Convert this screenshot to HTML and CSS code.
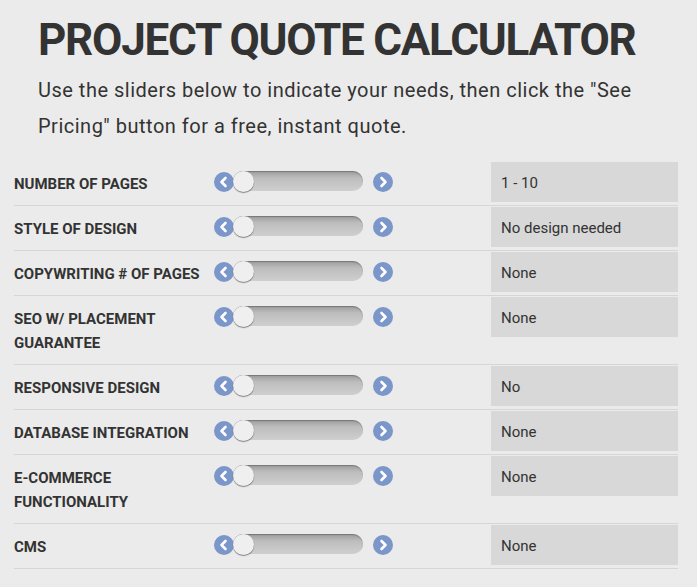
FILE: index.html
```html
<!DOCTYPE html>
<html>
<head>
<meta charset="utf-8">
<link rel="stylesheet" href="styles.css">
</head>
<body>
<div class="page">
  <h1 class="title">PROJECT QUOTE CALCULATOR</h1>
  <p class="intro">Use the sliders below to indicate your needs, then click the "See Pricing" button for a free, instant quote.</p>
  <div class="calc">
    <div class="row">
      <div class="label">NUMBER OF PAGES</div>
      <div class="slider">
        <span class="btn"><svg viewBox="0 0 20 20" width="20" height="20"><polyline points="11.5,6 7.5,10 11.5,14" /></svg></span>
        <span class="track"><span class="knob"></span></span>
        <span class="btn"><svg viewBox="0 0 20 20" width="20" height="20"><polyline points="8.5,6 12.5,10 8.5,14" /></svg></span>
      </div>
      <div class="value">1 - 10</div>
    </div>
    <div class="row">
      <div class="label">STYLE OF DESIGN</div>
      <div class="slider">
        <span class="btn"><svg viewBox="0 0 20 20" width="20" height="20"><polyline points="11.5,6 7.5,10 11.5,14" /></svg></span>
        <span class="track"><span class="knob"></span></span>
        <span class="btn"><svg viewBox="0 0 20 20" width="20" height="20"><polyline points="8.5,6 12.5,10 8.5,14" /></svg></span>
      </div>
      <div class="value">No design needed</div>
    </div>
    <div class="row">
      <div class="label">COPYWRITING # OF PAGES</div>
      <div class="slider">
        <span class="btn"><svg viewBox="0 0 20 20" width="20" height="20"><polyline points="11.5,6 7.5,10 11.5,14" /></svg></span>
        <span class="track"><span class="knob"></span></span>
        <span class="btn"><svg viewBox="0 0 20 20" width="20" height="20"><polyline points="8.5,6 12.5,10 8.5,14" /></svg></span>
      </div>
      <div class="value">None</div>
    </div>
    <div class="row">
      <div class="label">SEO W/ PLACEMENT GUARANTEE</div>
      <div class="slider">
        <span class="btn"><svg viewBox="0 0 20 20" width="20" height="20"><polyline points="11.5,6 7.5,10 11.5,14" /></svg></span>
        <span class="track"><span class="knob"></span></span>
        <span class="btn"><svg viewBox="0 0 20 20" width="20" height="20"><polyline points="8.5,6 12.5,10 8.5,14" /></svg></span>
      </div>
      <div class="value">None</div>
    </div>
    <div class="row">
      <div class="label">RESPONSIVE DESIGN</div>
      <div class="slider">
        <span class="btn"><svg viewBox="0 0 20 20" width="20" height="20"><polyline points="11.5,6 7.5,10 11.5,14" /></svg></span>
        <span class="track"><span class="knob"></span></span>
        <span class="btn"><svg viewBox="0 0 20 20" width="20" height="20"><polyline points="8.5,6 12.5,10 8.5,14" /></svg></span>
      </div>
      <div class="value">No</div>
    </div>
    <div class="row">
      <div class="label">DATABASE INTEGRATION</div>
      <div class="slider">
        <span class="btn"><svg viewBox="0 0 20 20" width="20" height="20"><polyline points="11.5,6 7.5,10 11.5,14" /></svg></span>
        <span class="track"><span class="knob"></span></span>
        <span class="btn"><svg viewBox="0 0 20 20" width="20" height="20"><polyline points="8.5,6 12.5,10 8.5,14" /></svg></span>
      </div>
      <div class="value">None</div>
    </div>
    <div class="row">
      <div class="label">E-COMMERCE<br>FUNCTIONALITY</div>
      <div class="slider">
        <span class="btn"><svg viewBox="0 0 20 20" width="20" height="20"><polyline points="11.5,6 7.5,10 11.5,14" /></svg></span>
        <span class="track"><span class="knob"></span></span>
        <span class="btn"><svg viewBox="0 0 20 20" width="20" height="20"><polyline points="8.5,6 12.5,10 8.5,14" /></svg></span>
      </div>
      <div class="value">None</div>
    </div>
    <div class="row">
      <div class="label">CMS</div>
      <div class="slider">
        <span class="btn"><svg viewBox="0 0 20 20" width="20" height="20"><polyline points="11.5,6 7.5,10 11.5,14" /></svg></span>
        <span class="track"><span class="knob"></span></span>
        <span class="btn"><svg viewBox="0 0 20 20" width="20" height="20"><polyline points="8.5,6 12.5,10 8.5,14" /></svg></span>
      </div>
      <div class="value">None</div>
    </div>
  </div>
</div>
</body>
</html>
```
FILE: styles.css
```css
html, body {
  margin: 0;
  padding: 0;
  background: #ebebeb;
}
body {
  font-family: Roboto, "Liberation Sans", sans-serif;
  color: #333;
}
.page {
  padding: 14px 19px 0 14px;
}
.title {
  margin: 0 0 6px 24px;
  font-size: 44px;
  line-height: 52px;
  font-weight: 700;
  letter-spacing: -1.25px;
  color: #333;
}
.intro {
  margin: 0 0 17px 24px;
  font-size: 20px;
  line-height: 36px;
  letter-spacing: 0.5px;
  max-width: 620px;
}
.calc {
  display: flex;
  flex-direction: column;
}
.row {
  display: grid;
  grid-template-columns: 200px 179px 1fr 187px;
  grid-template-areas: "label slider . value";
  border-bottom: 1px solid #d6d6d6;
  min-height: 44px;
}
.label {
  grid-area: label;
  padding: 11px 0 9px;
  font-size: 15px;
  line-height: 24px;
  font-weight: 700;
  color: #333;
}
.slider {
  grid-area: slider;
  display: flex;
  align-items: flex-start;
  padding-top: 11px;
}
.btn {
  width: 20px;
  height: 20px;
  border-radius: 50%;
  background: #7b96c9;
  display: flex;
  flex: none;
}
.btn svg polyline {
  fill: none;
  stroke: #fff;
  stroke-width: 2.6;
  stroke-linecap: round;
  stroke-linejoin: round;
}
.track {
  position: relative;
  width: 130px;
  height: 20px;
  margin-top: -1px;
  margin-left: -1px;
  margin-right: 10px;
  border-radius: 10px;
  background: linear-gradient(#9b9b9b, #bdbdbd 35%, #cfcfcf);
  box-shadow: inset 0 1px 1px rgba(0,0,0,0.25);
}
.knob {
  position: absolute;
  left: 0;
  top: 0;
  width: 21px;
  height: 21px;
  border-radius: 50%;
  background: #efefef;
  box-shadow: 0 1px 1px rgba(0,0,0,0.45);
}
.value {
  grid-area: value;
  margin-top: 1px;
  height: 40px;
  box-sizing: border-box;
  padding: 10px 10px 0;
  background: #d8d8d8;
  font-size: 15px;
  line-height: 22px;
  color: #333;
}
```
